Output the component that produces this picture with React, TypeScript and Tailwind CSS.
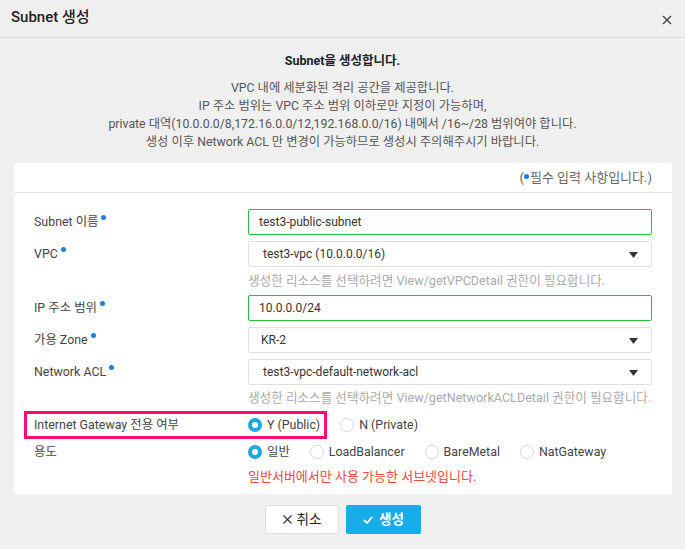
import React from "react";

const FONT = "font-['Roboto','Noto_Sans_CJK_KR',sans-serif]";

const Dot = () => (
  <span className="inline-block w-[5px] h-[5px] rounded-full bg-[#1a7fe0] ml-[3px] relative -top-[6px]" />
);

const Caret = () => (
  <svg width="9" height="6" viewBox="0 0 9 6" className="absolute right-[13px] top-[10px]">
    <path d="M0 0h9L4.5 6z" fill="#333" />
  </svg>
);

const Radio = ({ checked, label }: { checked?: boolean; label: string }) => (
  <label className="flex items-center gap-[5px] mr-[20px]">
    {checked ? (
      <span className="w-[14px] h-[14px] rounded-full border-[4px] border-[#1ba9e6] bg-white" />
    ) : (
      <span className="w-[14px] h-[14px] rounded-full border border-[#d6d6d6] bg-white" />
    )}
    <span className="text-[12.4px] text-[#444]">{label}</span>
  </label>
);

type RowProps = { label: string; required?: boolean; children: React.ReactNode; className?: string };

const Row = ({ label, required, children, className }: RowProps) => (
  <div className={`flex items-center ${className ?? ""}`}>
    <div className="w-[214px] text-[12.4px] text-[#444]">
      {label}
      {required && <Dot />}
    </div>
    <div className="flex-1">{children}</div>
  </div>
);

export default function App() {
  return (
    <div className={`w-[685px] h-[549px] bg-[#f0f0f0] ${FONT} overflow-hidden`}>
      <div className="h-[38px] border-b border-[#dcdcdc] flex items-center justify-between pl-[11px] pr-[13px]">
        <h1 className="text-[15px] font-medium text-[#222] -mt-[3px]">Subnet 생성</h1>
        <svg width="10" height="10" viewBox="0 0 10 10" className="mt-[2px]">
          <path d="M1 1l8 8M9 1L1 9" stroke="#444" strokeWidth="1.4" />
        </svg>
      </div>

      <div className="text-center pt-[14px]">
        <p className="text-[12.5px] font-bold text-[#222] leading-[18px]">Subnet을 생성합니다.</p>
        <div className="mt-[9px] text-[12.3px] text-[#555] leading-[18px]">
          <p>VPC 내에 세분화된 격리 공간을 제공합니다.</p>
          <p>IP 주소 범위는 VPC 주소 범위 이하로만 지정이 가능하며,</p>
          <p>private 대역(10.0.0.0/8,172.16.0.0/12,192.168.0.0/16) 내에서 /16~/28 범위여야 합니다.</p>
          <p>생성 이후 Network ACL 만 변경이 가능하므로 생성시 주의해주시기 바랍니다.</p>
        </div>
      </div>

      <div className="mx-[14px] mt-[12px] w-[658px] bg-white rounded-[3px]">
        <div className="h-[30px] border-b border-[#e2e2e2] flex items-center justify-end pr-[20px] text-[13px] text-[#666]">
          (<span className="inline-block w-[5px] h-[5px] rounded-full bg-[#1a7fe0] mr-[1px] relative -top-[1px]" />필수 입력 사항입니다.)
        </div>

        <div className="pl-[20px] pr-[20px] pt-[16px] pb-[5px]">
          <Row label="Subnet 이름" required>
            <div className="h-[26px] border border-[#1fc23a] rounded-[2px] flex items-center pl-[10px] text-[12px] text-[#333]">
              test3-public-subnet
            </div>
          </Row>

          <Row label="VPC" required className="mt-[6px]">
            <div className="relative h-[26px] border border-[#e0e0e0] rounded-[2px] flex items-center pl-[14px] text-[12px] text-[#333]">
              test3-vpc (10.0.0.0/16)
              <Caret />
            </div>
          </Row>
          <div className="pl-[214px] h-[28px] flex items-center text-[12.6px] text-[#aaa]">
            생성한 리소스를 선택하려면 View/getVPCDetail 권한이 필요합니다.
          </div>

          <Row label="IP 주소 범위" required>
            <div className="h-[26px] border border-[#1fc23a] rounded-[2px] flex items-center pl-[10px] text-[12px] text-[#333]">
              10.0.0.0/24
            </div>
          </Row>

          <Row label="가용 Zone" required className="mt-[6px]">
            <div className="relative h-[26px] border border-[#e0e0e0] rounded-[2px] flex items-center pl-[12px] text-[12px] text-[#333]">
              KR-2
              <Caret />
            </div>
          </Row>

          <Row label="Network ACL" required className="mt-[6px]">
            <div className="relative h-[26px] border border-[#e0e0e0] rounded-[2px] flex items-center pl-[14px] text-[12px] text-[#333]">
              test3-vpc-default-network-acl
              <Caret />
            </div>
          </Row>
          <div className="pl-[214px] h-[26px] flex items-center text-[12.6px] text-[#aaa]">
            생성한 리소스를 선택하려면 View/getNetworkACLDetail 권한이 필요합니다.
          </div>

          <div className="relative">
            <Row label="Internet Gateway 전용 여부" className="h-[28px]">
              <div className="flex items-center">
                <Radio checked label="Y (Public)" />
                <Radio label="N (Private)" />
              </div>
            </Row>
            <div className="absolute left-[-10px] top-0 w-[303px] h-[28px] border-[3px] border-[#ff0a78] pointer-events-none" />
          </div>

          <Row label="용도" className="h-[26px]">
            <div className="flex items-center">
              <Radio checked label="일반" />
              <Radio label="LoadBalancer" />
              <Radio label="BareMetal" />
              <Radio label="NatGateway" />
            </div>
          </Row>
          <div className="pl-[214px] h-[24px] flex items-center text-[13px] text-[#f0473a]">
            일반서버에서만 사용 가능한 서브넷입니다.
          </div>
        </div>
      </div>

      <div className="flex justify-center gap-[7px] mt-[11px] pl-[1px]">
        <button className="w-[74px] h-[29px] bg-white border border-[#dedede] rounded-[2px] flex items-center justify-center gap-[5px] text-[13.5px] text-[#222]">
          <svg width="9" height="9" viewBox="0 0 9 9">
            <path d="M0.5 0.5l8 8M8.5 0.5l-8 8" stroke="#333" strokeWidth="1.2" />
          </svg>
          취소
        </button>
        <button className="w-[75px] h-[29px] bg-[#17ade8] rounded-[2px] flex items-center justify-center gap-[6px] text-[13.5px] font-bold text-white">
          <svg width="10" height="8" viewBox="0 0 10 8">
            <path d="M1 4l3 3 5-6" stroke="#fff" strokeWidth="1.8" fill="none" />
          </svg>
          생성
        </button>
      </div>
    </div>
  );
}
